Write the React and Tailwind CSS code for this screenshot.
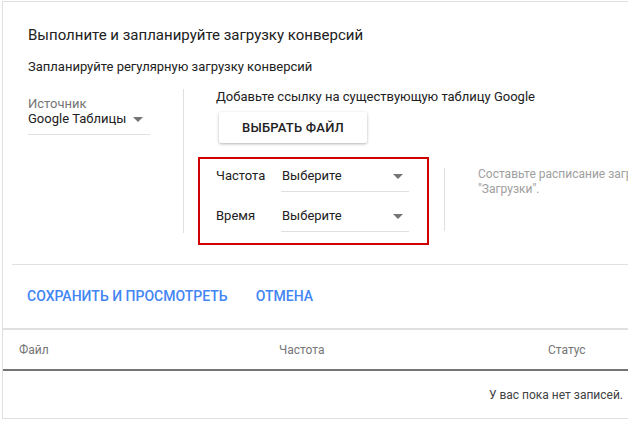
import React from 'react';

const Arrow = () => (
  <svg width="10" height="5" viewBox="0 0 10 5" className="shrink-0">
    <path d="M0 0h10L5 5z" fill="#757575" />
  </svg>
);

const SelectRow = ({ label }) => (
  <div className="flex items-end">
    <span className="w-[65px] shrink-0 pb-[8px] text-[13px] leading-[16px] text-[#212121]">{label}</span>
    <div className="flex w-[128px] shrink-0 items-center justify-between border-b border-[#e0e0e0] pb-[7px] pl-px pr-[6px]">
      <span className="text-[13px] leading-[16px] text-[#212121]">Выберите</span>
      <Arrow />
    </div>
  </div>
);

export default function App() {
  return (
    <div className="h-[421px] w-[628px] overflow-hidden bg-white font-['Roboto',sans-serif] text-[#212121]">
      {/* top card */}
      <section className="ml-[2px] mt-px h-[327px] border-l border-t border-[#e0e0e0]">
        <div className="pl-[25px] pt-[23px]">
          <h1 className="text-[15px] leading-[20px] text-[#212121]">
            Выполните и запланируйте загрузку конверсий
          </h1>
          <p className="mt-[14px] text-[13px] leading-[16px]">
            Запланируйте регулярную загрузку конверсий
          </p>

          <div className="mt-[14px] flex items-start">
            {/* source */}
            <div className="w-[122px] shrink-0 pt-[7px]">
              <div className="text-[13px] leading-[15px] text-[#757575]">Источник</div>
              <div className="flex items-center whitespace-nowrap border-b border-[#e0e0e0] pb-[7px]">
                <span className="text-[13px] leading-[16px]">Google Таблицы</span>
                <span className="ml-[7px]">
                  <Arrow />
                </span>
              </div>
            </div>

            <div className="ml-[33px] h-[144px] shrink-0 border-l border-[#e0e0e0]" />

            <div className="shrink-0">
              <p className="pl-[32px] text-[13px] leading-[16px]">
                Добавьте ссылку на существующую таблицу Google
              </p>
              <button className="ml-[35px] mt-[7px] h-[31px] w-[148px] rounded-[2px] bg-white text-[13px] font-medium tracking-[0.2px] text-[#212121] shadow-[0_1px_3px_rgba(0,0,0,0.3)]">
                ВЫБРАТЬ ФАЙЛ
              </button>

              <div className="mt-[14px] flex items-start">
                {/* red annotation frame */}
                <div className="ml-[14px] flex w-[231px] shrink-0 flex-col gap-[16px] border-2 border-[#d10000] pb-[11px] pl-[16px] pt-[9px]">
                  <SelectRow label="Частота" />
                  <SelectRow label="Время" />
                </div>

                <div className="ml-[15px] mt-[11px] h-[63px] shrink-0 border-l border-[#e0e0e0]" />

                <p className="ml-[33px] mt-[10px] whitespace-nowrap text-[12px] leading-[15px] text-[#9e9e9e]">
                  Составьте расписание загрузок на вкладке
                  <br />
                  "Загрузки".
                </p>
              </div>
            </div>
          </div>
        </div>

        <div className="ml-[9px] mt-[19px] border-t border-[#e0e0e0]" />

        <div className="flex gap-[28px] pl-[24px] pt-[23px]">
          <button className="text-[14px] font-medium leading-[16px] text-[#4285f4]">
            СОХРАНИТЬ И ПРОСМОТРЕТЬ
          </button>
          <button className="text-[14px] font-medium leading-[16px] text-[#4285f4]">
            ОТМЕНА
          </button>
        </div>
      </section>

      {/* table */}
      <div className="ml-[2px] border-l border-t-2 border-[#e0e0e0]">
        <div className="flex h-[41px] items-center border-b-2 border-[#757575] text-[12px] text-[#757575]">
          <span className="w-[276px] shrink-0 pl-[16px]">Файл</span>
          <span className="w-[269px] shrink-0">Частота</span>
          <span>Статус</span>
        </div>
        <div className="flex h-[48px] items-center justify-end border-b border-[#e0e0e0] pr-[5px] text-[12px] text-[#424242]">
          У вас пока нет записей.
        </div>
      </div>
    </div>
  );
}
